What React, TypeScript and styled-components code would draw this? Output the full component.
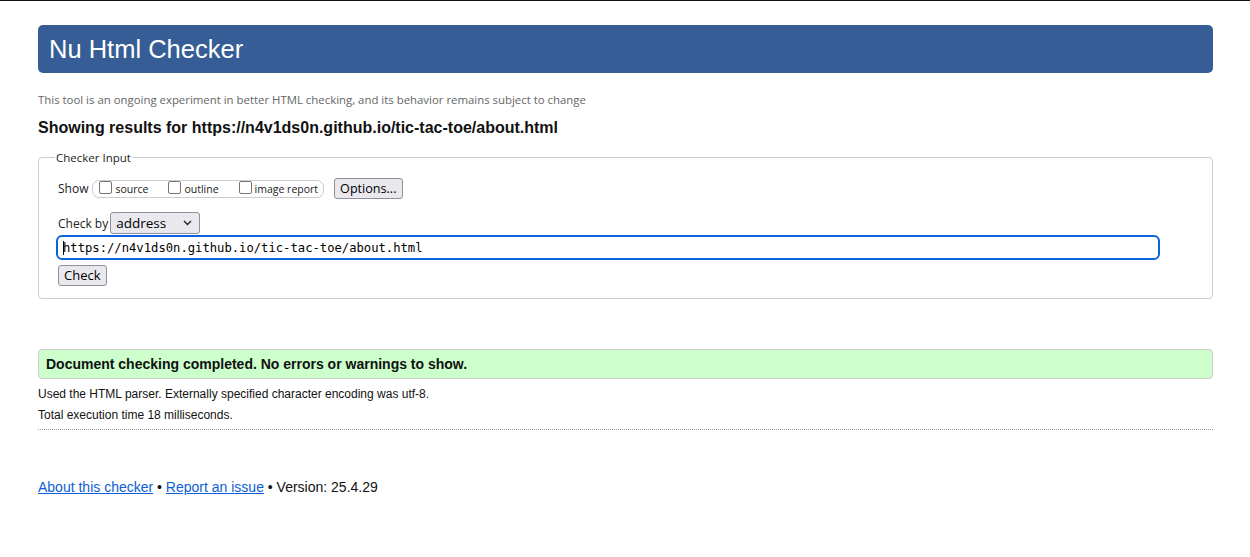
import React from "react";
import styled, { createGlobalStyle } from "styled-components";

const Global = createGlobalStyle`
  html, body { margin: 0; padding: 0; background: #fff; }
  body {
    border-top: 1px solid #111;
    font-family: "Liberation Sans", Arial, sans-serif;
    color: #000;
  }
`;

const Page = styled.div`
  padding: 24px 37px 0 38px;
  display: flex;
  flex-direction: column;
`;

const Header = styled.h1`
  margin: 0;
  height: 48px;
  box-sizing: border-box;
  background: #365d95;
  border-radius: 5px;
  color: #fff;
  font-weight: normal;
  font-size: 25.5px;
  line-height: 48px;
  padding-left: 11px;
`;

const Subtitle = styled.p`
  margin: 19px 0 0;
  font-family: "Open Sans", "Noto Sans", sans-serif;
  font-size: 11.4px;
  line-height: 16px;
  color: #666;
`;

const Results = styled.h2`
  margin: 10px 0 0;
  font-size: 16px;
  line-height: 20px;
  font-weight: bold;
  color: #111;
`;

const Fieldset = styled.fieldset`
  margin: 12px 0 0;
  padding: 13px 20px 12px 19px;
  border: 1px solid #ccc;
  border-radius: 4px;
  min-width: 0;
`;

const Legend = styled.legend`
  margin-left: -3px;
  padding: 0 1px;
  font-family: "Open Sans", "Noto Sans", sans-serif;
  font-size: 11.5px;
  color: #222;
`;

const Row = styled.div`
  display: flex;
  align-items: center;
  gap: 4px;
  font-family: "Open Sans", "Noto Sans", sans-serif;
  font-size: 12px;
  color: #222;
`;

const ShowRow = styled(Row)`
  margin-top: 0;
`;

const CheckByRow = styled(Row)`
  margin-top: 13px;
  gap: 2px;
`;

const Group = styled.span`
  display: inline-flex;
  align-items: center;
  height: 18px;
  box-sizing: border-box;
  border: 1px solid #ccc;
  border-radius: 7px;
  padding: 0 5px 0 6px;
  margin-right: 6px;
  gap: 20px;
`;

const Opt = styled.label`
  display: inline-flex;
  align-items: center;
  font-size: 10.5px;
  color: #222;
`;

const Box = styled.span`
  width: 13px;
  height: 13px;
  box-sizing: border-box;
  border: 1px solid #767676;
  border-radius: 2px;
  background: #fff;
  margin-right: 3px;
  margin-top: -2px;
`;

const Button = styled.button`
  font-family: "Open Sans", "Noto Sans", sans-serif;
  font-size: 12.6px;
  color: #000;
  background: #e9e9ed;
  border: 1px solid #8f8f9d;
  border-radius: 3px;
  height: 21px;
  padding: 0 5px;
  line-height: 19px;
`;

const Select = styled.div`
  display: inline-flex;
  align-items: center;
  justify-content: space-between;
  width: 90px;
  height: 22px;
  box-sizing: border-box;
  background: #e9e9ed;
  border: 1px solid #8f8f9d;
  border-radius: 3px;
  padding: 0 7px 0 5px;
  font-size: 13.5px;
  color: #000;
`;

const UrlInput = styled.div`
  margin: 1px 0 0 -2px;
  width: 1104px;
  height: 25px;
  box-sizing: border-box;
  border: 2px solid #0b63de;
  border-radius: 6px;
  display: flex;
  align-items: center;
  padding-left: 5px;
  font-family: "DejaVu Sans Mono", "Liberation Mono", monospace;
  font-size: 12.2px;
  color: #000;
`;

const Caret = styled.span`
  display: inline-block;
  width: 1px;
  height: 14px;
  background: #000;
  margin-right: -1px;
`;

const CheckButton = styled(Button)`
  align-self: flex-start;
  margin-top: 5px;
  font-size: 13px;
  height: 21px;
  padding: 0 5px;
`;

const Success = styled.p`
  margin: 50px 0 0;
  height: 30px;
  box-sizing: border-box;
  background: #ccffcc;
  border: 1px solid #ccc;
  border-radius: 4px;
  padding-left: 7px;
  font-size: 14px;
  font-weight: bold;
  line-height: 28px;
  color: #111;
`;

const Detail = styled.p`
  margin: 0;
  font-size: 12px;
  line-height: 21px;
  color: #111;
`;

const Details = styled.div`
  margin-top: 5px;
  padding-bottom: 3px;
  border-bottom: 1px dotted #999;
`;

const Footer = styled.p`
  margin: 48px 0 0;
  font-size: 14px;
  line-height: 18px;
  color: #111;
`;

const Link = styled.a`
  color: #0b5ed7;
  text-decoration: underline;
`;

export default function App() {
  return (
    <>
      <Global />
      <Page>
        <Header>Nu Html Checker</Header>
        <Subtitle>
          This tool is an ongoing experiment in better HTML checking, and its behavior remains subject to change
        </Subtitle>
        <Results>Showing results for https://n4v1ds0n.github.io/tic-tac-toe/about.html</Results>
        <Fieldset>
          <Legend>Checker Input</Legend>
          <ShowRow>
            <span>Show</span>
            <Group>
              <Opt><Box />source</Opt>
              <Opt><Box />outline</Opt>
              <Opt><Box />image report</Opt>
            </Group>
            <Button>Options...</Button>
          </ShowRow>
          <CheckByRow>
            <span>Check by</span>
            <Select>
              <span>address</span>
              <svg width="9" height="6" viewBox="0 0 9 6">
                <path d="M1 1l3.5 3.5L8 1" fill="none" stroke="#222" strokeWidth="1.4" />
              </svg>
            </Select>
          </CheckByRow>
          <UrlInput>
            <Caret />https://n4v1ds0n.github.io/tic-tac-toe/about.html
          </UrlInput>
          <CheckButton>Check</CheckButton>
        </Fieldset>
        <Success>Document checking completed. No errors or warnings to show.</Success>
        <Details>
          <Detail>Used the HTML parser. Externally specified character encoding was utf-8.</Detail>
          <Detail>Total execution time 18 milliseconds.</Detail>
        </Details>
        <Footer>
          <Link href="#">About this checker</Link> • <Link href="#">Report an issue</Link> • Version: 25.4.29
        </Footer>
      </Page>
    </>
  );
}
